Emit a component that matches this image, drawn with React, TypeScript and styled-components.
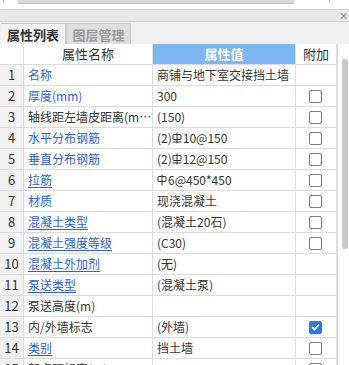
import React from "react";
import styled, { createGlobalStyle } from "styled-components";

const GlobalStyle = createGlobalStyle`
  html, body {
    margin: 0;
    padding: 0;
    background: #ffffff;
    overflow: hidden;
  }
  body {
    font-family: "Noto Sans CJK SC", "Noto Sans", sans-serif;
    font-size: 12px;
    color: #333333;
  }
`;

const Panel = styled.div`
  width: 349px;
  height: 365px;
  display: flex;
  flex-direction: column;
  overflow: hidden;
`;

const TopStrip = styled.div`
  height: 9px;
  display: flex;
  align-items: flex-start;
  padding-left: 3px;
  border-bottom: 1px solid #d6d6d6;

  .edge {
    width: 1px;
    height: 3px;
    background: #c8c8c8;
  }

  .thumb {
    width: 276px;
    height: 3px;
    margin-left: 14px;
    background: #d9d9d9;
    border-bottom: 1px solid #c4c4c4;
  }

  .tick {
    width: 1px;
    height: 3px;
    margin-left: 35px;
    background: #bdbdbd;
  }
`;

const TitleBar = styled.div`
  height: 11px;
  background: #e8e8e8;
  border-bottom: 1px solid #d4d4d4;
  display: flex;
  justify-content: flex-end;
  align-items: center;
  padding-right: 1px;
  color: #8a8a8a;
  font-size: 11px;
  line-height: 11px;
`;

const TabBar = styled.div`
  height: 22px;
  background: #f0f0f0;
  display: flex;
  align-items: flex-end;
  padding-left: 1px;
`;

const Tab = styled.div<{ $active?: boolean }>`
  height: 21px;
  width: 65px;
  box-sizing: border-box;
  display: flex;
  align-items: center;
  justify-content: center;
  font-size: 13px;
  font-weight: 700;
  color: ${(p) => (p.$active ? "#333333" : "#9b9b9b")};
  background: ${(p) => (p.$active ? "#f3f3f3" : "#dedede")};
  border: 1px solid #cbcbcb;
  border-bottom: none;
  border-left: ${(p) => (p.$active ? "none" : "1px solid #cbcbcb")};
`;

const Body = styled.div`
  display: flex;
  flex: 1;
  min-height: 0;
`;

const Grid = styled.div`
  width: 337px;
  display: grid;
  grid-template-columns: 24px 129px 143px 41px;
  grid-auto-rows: 21px;
  align-content: start;
`;

const Cell = styled.div`
  box-sizing: border-box;
  border-right: 1px solid #dcdcdc;
  border-bottom: 1px solid #dcdcdc;
  display: flex;
  align-items: center;
  white-space: nowrap;
  overflow: hidden;
  line-height: 20px;
`;

const HeadCell = styled(Cell)<{ $blue?: boolean }>`
  justify-content: center;
  font-size: 13px;
  background: ${(p) => (p.$blue ? "#7db7f3" : "#ffffff")};
  color: ${(p) => (p.$blue ? "#ffffff" : "#333333")};
  font-weight: ${(p) => (p.$blue ? 700 : 400)};
`;

const NumCell = styled(Cell)`
  justify-content: center;
  background: #f0f0f0;
  color: #333333;
  font-size: 13px;
`;

const NameCell = styled(Cell)<{ $blue?: boolean; $link?: boolean }>`
  padding-left: 4px;
  color: ${(p) => (p.$blue ? "#2a5fe0" : "#333333")};

  span {
    text-decoration: ${(p) => (p.$link ? "underline" : "none")};
    text-underline-offset: 2px;
    overflow: hidden;
    text-overflow: ellipsis;
  }
`;

const ValueCell = styled(Cell)`
  padding-left: 4px;
  color: #333333;
`;

const ExtraCell = styled(Cell)`
  justify-content: center;
  padding-right: 1px;
`;

const Check = styled.div<{ $on?: boolean }>`
  width: 13px;
  height: 13px;
  box-sizing: border-box;
  border-radius: 2px;
  border: 1px solid ${(p) => (p.$on ? "#2b7be0" : "#7c7c7c")};
  background: ${(p) => (p.$on ? "#2b7be0" : "#ffffff")};
  display: flex;
  align-items: center;
  justify-content: center;
`;

const Track = styled.div`
  width: 12px;
  border-left: 1px solid #dcdcdc;
  box-sizing: border-box;
  padding: 15px 1px 0 4px;
  background: #ffffff;
`;

const Thumb = styled.div`
  width: 6px;
  height: 190px;
  border-radius: 3px;
  background: #c9c9c9;
`;

const Bar = styled.svg`
  display: inline-block;
  vertical-align: -1px;
  margin: 0 1px 0 0;
`;

const Rebar = ({ grade }: { grade: "A" | "C" }) => (
  <Bar width="10" height="12" viewBox="0 0 10 12">
    <rect x="1" y="2.5" width="8" height="5" rx="0.5" fill="none" stroke="#333" strokeWidth="1" />
    <line x1="5" y1="0.5" x2="5" y2="11.5" stroke="#333" strokeWidth="1" />
    {grade === "C" && <line x1="0.5" y1="10" x2="9.5" y2="10" stroke="#333" strokeWidth="1" />}
  </Bar>
);

type Row = {
  name: string;
  value: React.ReactNode;
  blue?: boolean;
  link?: boolean;
  check?: "off" | "on" | null;
};

const rows: Row[] = [
  { name: "名称", value: "商铺与地下室交接挡土墙", blue: true, check: null },
  { name: "厚度(mm)", value: "300", blue: true, check: "off" },
  { name: "轴线距左墙皮距离(mm)", value: "(150)", check: "off" },
  {
    name: "水平分布钢筋",
    value: (
      <>
        (2)
        <Rebar grade="C" />
        10@150
      </>
    ),
    blue: true,
    check: "off",
  },
  {
    name: "垂直分布钢筋",
    value: (
      <>
        (2)
        <Rebar grade="C" />
        12@150
      </>
    ),
    blue: true,
    check: "off",
  },
  {
    name: "拉筋",
    value: (
      <>
        <Rebar grade="A" />
        6@450*450
      </>
    ),
    blue: true,
    link: true,
    check: "off",
  },
  { name: "材质", value: "现浇混凝土", blue: true, check: "off" },
  { name: "混凝土类型", value: "(混凝土20石)", blue: true, link: true, check: "off" },
  { name: "混凝土强度等级", value: "(C30)", blue: true, link: true, check: "off" },
  { name: "混凝土外加剂", value: "(无)", blue: true, link: true, check: null },
  { name: "泵送类型", value: "(混凝土泵)", blue: true, link: true, check: null },
  { name: "泵送高度(m)", value: "", check: null },
  { name: "内/外墙标志", value: "(外墙)", check: "on" },
  { name: "类别", value: "挡土墙", blue: true, link: true, check: "off" },
  { name: "起点顶标高(m)", value: "", check: "off" },
];

const Tick = () => (
  <svg width="9" height="8" viewBox="0 0 9 8">
    <path d="M1 4.2 L3.5 6.5 L8 1.5" fill="none" stroke="#ffffff" strokeWidth="1.8" />
  </svg>
);

const App = () => {
  return (
    <>
      <GlobalStyle />
      <Panel>
        <TopStrip>
          <div className="edge" />
          <div className="thumb" />
          <div className="tick" />
        </TopStrip>
        <TitleBar>✕</TitleBar>
        <TabBar>
          <Tab $active>属性列表</Tab>
          <Tab>图层管理</Tab>
        </TabBar>
        <Body>
          <Grid>
            <HeadCell />
            <HeadCell>属性名称</HeadCell>
            <HeadCell $blue>属性值</HeadCell>
            <HeadCell>附加</HeadCell>
            {rows.map((r, i) => (
              <React.Fragment key={i}>
                <NumCell>{i + 1}</NumCell>
                <NameCell $blue={r.blue} $link={r.link}>
                  <span>{r.name}</span>
                </NameCell>
                <ValueCell>{r.value}</ValueCell>
                <ExtraCell>
                  {r.check && <Check $on={r.check === "on"}>{r.check === "on" && <Tick />}</Check>}
                </ExtraCell>
              </React.Fragment>
            ))}
          </Grid>
          <Track>
            <Thumb />
          </Track>
        </Body>
      </Panel>
    </>
  );
};

export default App;
